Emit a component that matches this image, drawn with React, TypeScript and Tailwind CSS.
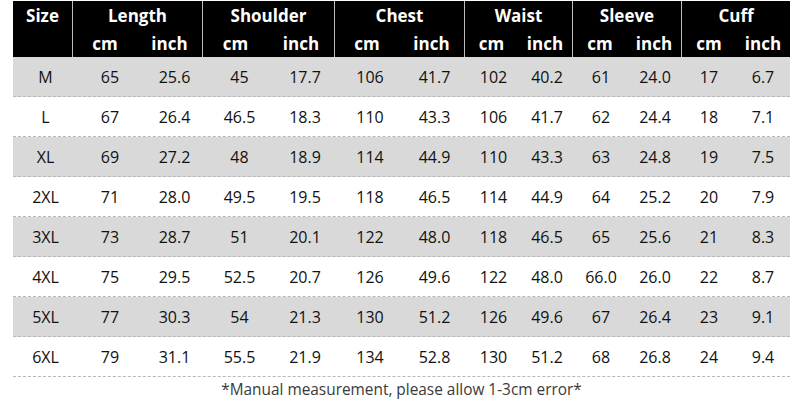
const groups = [
  { label: "Length", w: ["w-[64px]", "w-[65px]"] },
  { label: "Shoulder", w: ["w-[65px]", "w-[66px]"] },
  { label: "Chest", w: ["w-[64px]", "w-[65px]"] },
  { label: "Waist", w: ["w-[53px]", "w-[54px]"] },
  { label: "Sleeve", w: ["w-[54px]", "w-[54px]"] },
  { label: "Cuff", w: ["w-[54px]", "w-[54px]"] },
]

const widths = [
  "w-[65px]",
  "w-[64px]",
  "w-[65px]",
  "w-[65px]",
  "w-[66px]",
  "w-[64px]",
  "w-[65px]",
  "w-[53px]",
  "w-[54px]",
  "w-[54px]",
  "w-[54px]",
  "w-[54px]",
  "w-[54px]",
]

const rows = [
  ["M", "65", "25.6", "45", "17.7", "106", "41.7", "102", "40.2", "61", "24.0", "17", "6.7"],
  ["L", "67", "26.4", "46.5", "18.3", "110", "43.3", "106", "41.7", "62", "24.4", "18", "7.1"],
  ["XL", "69", "27.2", "48", "18.9", "114", "44.9", "110", "43.3", "63", "24.8", "19", "7.5"],
  ["2XL", "71", "28.0", "49.5", "19.5", "118", "46.5", "114", "44.9", "64", "25.2", "20", "7.9"],
  ["3XL", "73", "28.7", "51", "20.1", "122", "48.0", "118", "46.5", "65", "25.6", "21", "8.3"],
  ["4XL", "75", "29.5", "52.5", "20.7", "126", "49.6", "122", "48.0", "66.0", "26.0", "22", "8.7"],
  ["5XL", "77", "30.3", "54", "21.3", "130", "51.2", "126", "49.6", "67", "26.4", "23", "9.1"],
  ["6XL", "79", "31.1", "55.5", "21.9", "134", "52.8", "130", "51.2", "68", "26.8", "24", "9.4"],
]

export default function App() {
  return (
    <div className="h-[403px] w-[800px] overflow-hidden bg-white font-['Open_Sans','Noto_Sans',sans-serif]">
      <div className="ml-[13px] mt-px w-[777px]">
        {/* header */}
        <div className="flex h-[56px] bg-black text-[17px] font-bold text-white">
          <div className="flex h-[30px] w-[65px] items-center justify-center">Size</div>
          {groups.map((g) => (
            <div key={g.label} className="flex flex-col border-l border-[#bdbdbd]">
              <div className="flex h-[30px] items-center justify-center">{g.label}</div>
              <div className="flex h-[26px]">
                <div className={`${g.w[0]} flex items-center justify-center`}>cm</div>
                <div className={`${g.w[1]} flex items-center justify-center`}>inch</div>
              </div>
            </div>
          ))}
        </div>

        {/* body */}
        {rows.map((r, i) => (
          <div
            key={r[0]}
            className={`flex h-[40px] border-b border-dashed border-[#b8b8b8] text-[16px] text-[#111] ${
              i % 2 === 0 ? "bg-[#d9d9d9]" : "bg-white"
            }`}
          >
            {r.map((c, j) => (
              <div key={j} className={`${widths[j]} flex items-center justify-center`}>
                {c}
              </div>
            ))}
          </div>
        ))}

        <div className="flex h-[26px] items-center justify-center text-[15.4px] text-[#3a3a3a]">
          *Manual measurement, please allow 1-3cm error*
        </div>
      </div>
    </div>
  )
}
